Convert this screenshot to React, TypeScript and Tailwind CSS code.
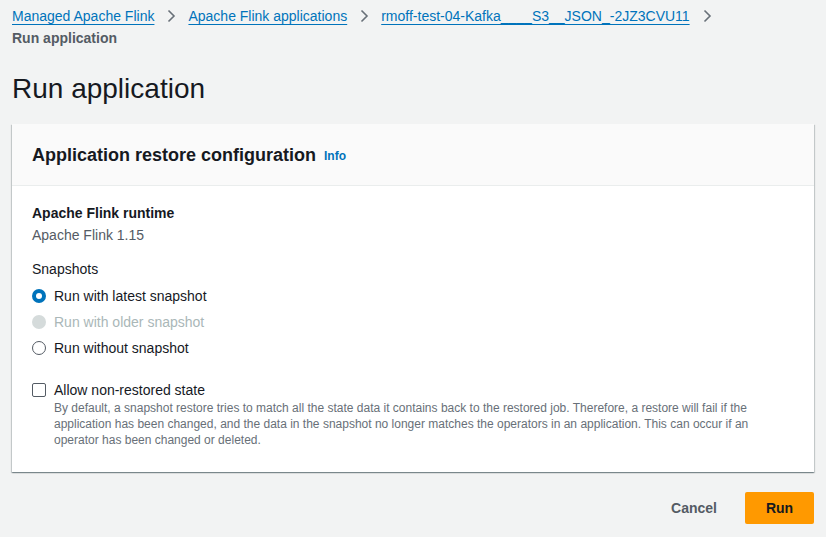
import { useState } from "react";

const crumbs = [
  "Managed Apache Flink",
  "Apache Flink applications",
  "rmoff-test-04-Kafka____S3__JSON_-2JZ3CVU11",
];

const options = [
  { id: "latest", label: "Run with latest snapshot", disabled: false },
  { id: "older", label: "Run with older snapshot", disabled: true },
  { id: "none", label: "Run without snapshot", disabled: false },
];

function Chevron() {
  return (
    <svg width="16" height="16" viewBox="0 0 16 16" className="mx-[9px] shrink-0">
      <path d="M5.5 2.5 11 8l-5.5 5.5" fill="none" stroke="#687078" strokeWidth="1.6" />
    </svg>
  );
}

function Radio({ checked, disabled }: { checked: boolean; disabled: boolean }) {
  if (disabled) {
    return <span className="w-[14px] h-[14px] rounded-full bg-[#d5dbdb] shrink-0" />;
  }
  if (checked) {
    return (
      <span className="w-[14px] h-[14px] rounded-full bg-[#0073bb] flex items-center justify-center shrink-0">
        <span className="w-[6px] h-[6px] rounded-full bg-white" />
      </span>
    );
  }
  return <span className="w-[14px] h-[14px] rounded-full border-[1.5px] border-[#545b64] bg-white shrink-0" />;
}

export default function App() {
  const [snapshot, setSnapshot] = useState("latest");
  const [allowNonRestored, setAllowNonRestored] = useState(false);

  return (
    <div className="min-h-[537px] bg-[#f2f3f3] px-3 font-['Liberation_Sans',Arial,sans-serif] text-[#16191f]">
      {/* Breadcrumbs */}
      <nav className="pt-[6px] flex items-center text-[14px] leading-[20px]">
        {crumbs.map((c) => (
          <div key={c} className="flex items-center">
            <a className="text-[#0073bb] underline underline-offset-[3px] decoration-1 cursor-pointer">{c}</a>
            <Chevron />
          </div>
        ))}
      </nav>
      <div className="text-[14px] leading-[20px] font-bold text-[#545b64] mt-[2px]">Run application</div>

      <h1 className="text-[28px] leading-[36px] mt-[23px] mb-[17px] text-[#16191f]">Run application</h1>

      {/* Container */}
      <div className="bg-white shadow-[0_1px_1px_0_rgba(0,28,36,0.3),1px_1px_1px_0_rgba(0,28,36,0.15),-1px_1px_1px_0_rgba(0,28,36,0.15)]">
        <div className="bg-[#fafafa] border-b border-[#eaeded] px-5 h-[62px] flex items-center">
          <h2 className="text-[18px] font-bold leading-[22px]">Application restore configuration</h2>
          <a className="ml-2 text-[12px] font-bold text-[#0073bb] mt-[3px] cursor-pointer">Info</a>
        </div>

        <div className="px-5 pt-[17px] pb-[24px] text-[14px] leading-[20px]">
          <div className="font-bold">Apache Flink runtime</div>
          <div className="text-[#545b64] mt-[2px]">Apache Flink 1.15</div>

          <div className="mt-[14px]">Snapshots</div>
          <div className="mt-[7px] flex flex-col gap-[6px]">
            {options.map((o) => (
              <label
                key={o.id}
                className={`flex items-center gap-[8px] ${o.disabled ? "text-[#aab7b8]" : "cursor-pointer"}`}
                onClick={() => !o.disabled && setSnapshot(o.id)}
              >
                <Radio checked={snapshot === o.id} disabled={o.disabled} />
                <span>{o.label}</span>
              </label>
            ))}
          </div>

          <div className="mt-[22px] flex gap-[8px]">
            <button
              onClick={() => setAllowNonRestored(!allowNonRestored)}
              className={`mt-[3px] w-[14px] h-[14px] rounded-[2px] border-[1.5px] shrink-0 ${
                allowNonRestored ? "bg-[#0073bb] border-[#0073bb]" : "bg-white border-[#545b64]"
              }`}
            />
            <div>
              <div>Allow non-restored state</div>
              <p className="text-[12px] leading-[16px] text-[#687078] mt-[0px] max-w-[730px]">
                By default, a snapshot restore tries to match all the state data it contains back to the restored job.
                Therefore, a restore will fail if the application has been changed, and the data in the snapshot no
                longer matches the operators in an application. This can occur if an operator has been changed or
                deleted.
              </p>
            </div>
          </div>
        </div>
      </div>

      {/* Actions */}
      <div className="flex justify-end items-center mt-5 gap-[8px]">
        <button className="px-5 h-[32px] text-[14px] font-bold text-[#545b64]">Cancel</button>
        <button className="px-5 h-[32px] w-[69px] rounded-[2px] bg-[#ff9900] text-[14px] font-bold text-[#16191f]">
          Run
        </button>
      </div>
    </div>
  );
}
